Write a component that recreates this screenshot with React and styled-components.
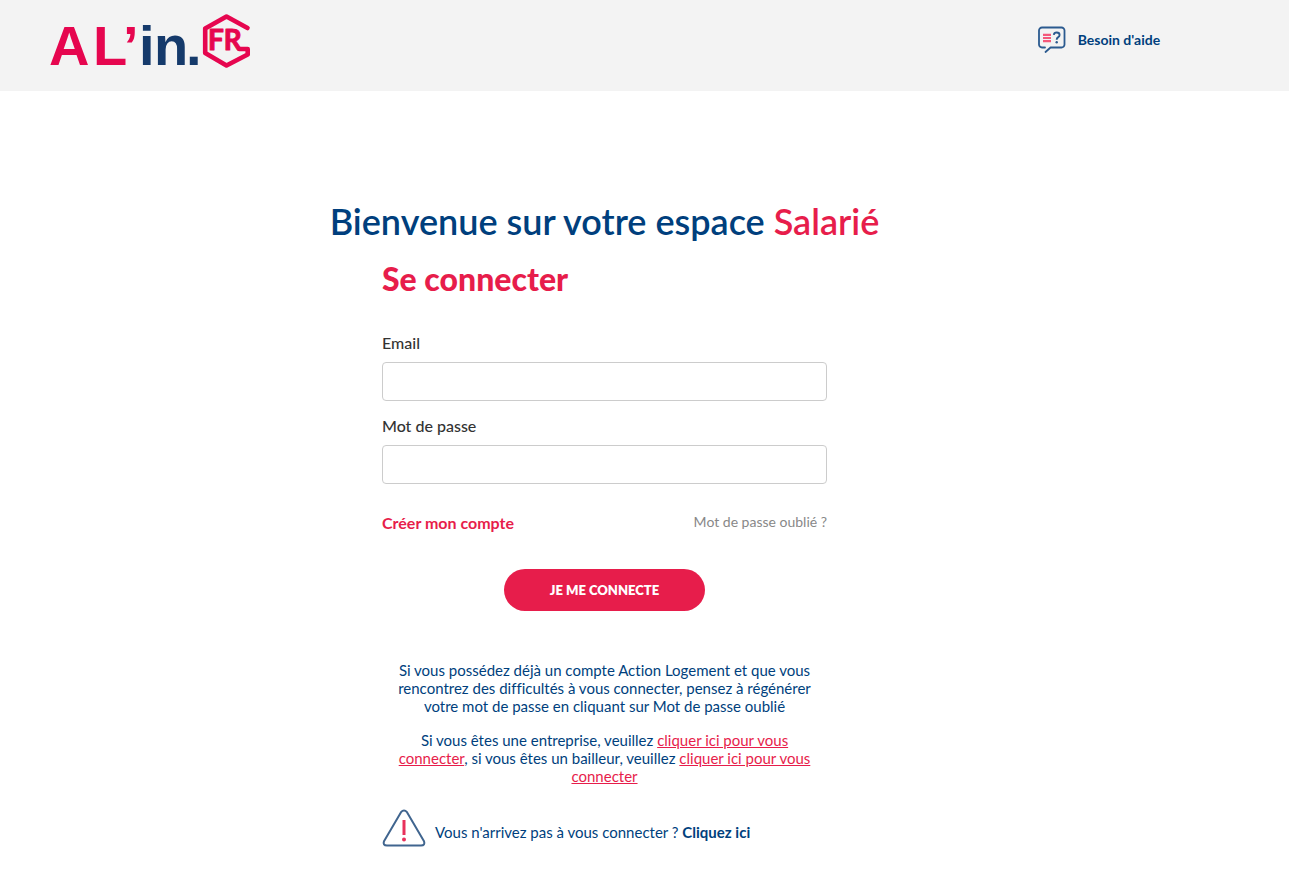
import React, { useState } from 'react';
import styled, { createGlobalStyle } from 'styled-components';

const GlobalStyle = createGlobalStyle`
    :root {
        --mainBlue: #003f7d;
        --mainRed: #e71d4b;
        --mainGrey: #f3f3f3;
        --mainDark: #333;
    }
    * {
        box-sizing: border-box;
    }
    body {
        margin: 0;
        background: #fff;
        color: var(--mainBlue);
        font-family: Lato, "Liberation Sans", sans-serif;
        font-size: 15px;
        font-variant-ligatures: none;
        line-height: 18px;
    }
`;

function Logo() {
    return (
        <svg width="202" height="56" viewBox="0 0 202 56" overflow="visible" role="img" aria-label="AL'in.fr">
            <g fontFamily="Liberation Sans, sans-serif" fontWeight="700" fontSize="56">
                <text y="52" fill="#e6064f">
                    <tspan x="-1">A</tspan>
                    <tspan x="43">L</tspan>
                    <tspan x="73">’</tspan>
                </text>
                <text y="52" fill="#153a6b">
                    <tspan x="89">i</tspan>
                    <tspan x="104">n</tspan>
                    <tspan x="136">.</tspan>
                </text>
            </g>
            <path
                d="M197.500 15 176.500 3.500 155.200 15.500v24.500l21.300 12.500 21.200-11v-5.500h-8.500"
                fill="none"
                stroke="#e6064f"
                strokeWidth="4.600"
                strokeLinejoin="round"
                strokeLinecap="round"
            />
            <text x="158" y="37" fill="#e6064f" stroke="#e6064f" strokeWidth="1" strokeLinejoin="round" fontFamily="Lato, sans-serif" fontWeight="700" fontSize="28">FR</text>
        </svg>
    );
}

function HelpIcon() {
    return (
        <svg width="28" height="28" viewBox="0 0 28 28" aria-hidden="true">
            <path
                d="M7 21.500H4A3 3 0 0 1 1 18.500V4.500A3 3 0 0 1 4 1.500H23.500A3 3 0 0 1 26.500 4.500V18.500A3 3 0 0 1 23.500 21.500H12.500L7.500 26"
                fill="none"
                stroke="#2b5a8f"
                strokeWidth="1.800"
                strokeLinecap="round"
                strokeLinejoin="round"
            />
            <path d="M5 8.800h8M5 12h8M5 15.200h8" stroke="#f4587a" strokeWidth="2.200" />
            <path d="M15.800 8.800q.3-2.300 2.900-2.300 2.900 0 2.900 2.500 0 1.500-1.600 2.400-1.300.8-1.300 2.400" fill="none" stroke="#2b5a8f" strokeWidth="1.900" />
            <circle cx="18.700" cy="16.200" r="1.200" fill="#2b5a8f" />
        </svg>
    );
}

function WarningIcon() {
    return (
        <svg width="44" height="38" viewBox="0 0 44 38" aria-hidden="true">
            <path
                d="M19 3.200Q22 -.2 25 3.200L42 32.200Q43.500 36.500 39 36.500H5Q.5 36.500 2 32.200Z"
                fill="none"
                stroke="#40658f"
                strokeWidth="2"
                strokeLinejoin="round"
            />
            <path d="M22 11v15" stroke="#e8315b" strokeWidth="3" />
            <circle cx="22" cy="30.500" r="2" fill="#e8315b" />
        </svg>
    );
}

function Field({ id, label, type, value, onChange }) {
    return (
        <FieldWrapper>
            <Label htmlFor={id}>{label}</Label>
            <Input id={id} type={type} value={value} onChange={e => onChange(e.target.value)} />
        </FieldWrapper>
    );
}

export default function App() {
    const [email, setEmail] = useState('');
    const [password, setPassword] = useState('');

    return (
        <>
            <GlobalStyle />
            <Header>
                <LogoLink href="#accueil">
                    <Logo />
                </LogoLink>
                <HelpLink href="#aide">
                    <HelpIcon />
                    Besoin d'aide
                </HelpLink>
            </Header>
            <Main>
                <Title>
                    Bienvenue sur votre espace <span>Salarié</span>
                </Title>
                <LoginForm onSubmit={e => e.preventDefault()}>
                    <Subtitle>Se connecter</Subtitle>
                    <Field id="email" label="Email" type="email" value={email} onChange={setEmail} />
                    <Field id="password" label="Mot de passe" type="password" value={password} onChange={setPassword} />
                    <LinksRow>
                        <CreateLink href="#creer">Créer mon compte</CreateLink>
                        <ForgotLink href="#oubli">Mot de passe oublié ?</ForgotLink>
                    </LinksRow>
                    <SubmitButton type="submit">Je me connecte</SubmitButton>
                    <Notes>
                        <p>
                            Si vous possédez déjà un compte Action Logement et que vous rencontrez des
                            difficultés à vous connecter, pensez à régénérer votre mot de passe en cliquant
                            sur Mot de passe oublié
                        </p>
                        <p>
                            Si vous êtes une entreprise, veuillez <a href="#entreprise">cliquer ici pour vous connecter</a>,
                            si vous êtes un bailleur, veuillez <a href="#bailleur">cliquer ici pour vous connecter</a>
                        </p>
                    </Notes>
                    <Warning>
                        <WarningIcon />
                        <p>
                            Vous n'arrivez pas à vous connecter ? <a href="#probleme">Cliquez ici</a>
                        </p>
                    </Warning>
                </LoginForm>
            </Main>
        </>
    );
}

const Header = styled.header`
    display: flex;
    justify-content: space-between;
    align-items: flex-start;
    padding: 13px 10% 22px 50px;
    background: var(--mainGrey);
`;

const LogoLink = styled.a`
    display: flex;
`;

const HelpLink = styled.a`
    display: flex;
    align-items: center;
    gap: 12px;
    padding-top: 13px;
    color: var(--mainBlue);
    font-size: 14px;
    font-weight: 700;
    text-decoration: none;
`;

const Main = styled.main`
    display: flex;
    flex-direction: column;
    align-items: center;
    padding: 108px 80px 16px 0;
`;

const Title = styled.h1`
    margin: 0 0 16px;
    font-size: 36px;
    font-weight: 600;
    line-height: 44px;
    text-align: center;
    span {
        color: var(--mainRed);
    }
`;

const LoginForm = styled.form`
    display: flex;
    flex-direction: column;
    width: 100%;
    max-width: 445px;
`;

const Subtitle = styled.h2`
    margin: 0 0 34px;
    color: var(--mainRed);
    font-size: 32px;
    font-weight: 900;
    line-height: 40px;
`;

const FieldWrapper = styled.div`
    display: flex;
    flex-direction: column;
    gap: 9px;
    margin-bottom: 15px;
`;

const Label = styled.label`
    color: var(--mainDark);
    font-size: 16px;
    font-weight: 500;
    line-height: 20px;
`;

const Input = styled.input`
    height: 39px;
    padding: 0 12px;
    border: 1px solid #ccc;
    border-radius: 4px;
    background: #fff;
    font: inherit;
`;

const LinksRow = styled.div`
    display: flex;
    justify-content: space-between;
    margin: 14px 0 36px;
`;

const CreateLink = styled.a`
    color: var(--mainRed);
    font-size: 16px;
    font-weight: 700;
    line-height: 20px;
    text-decoration: none;
`;

const ForgotLink = styled.a`
    color: #888;
    font-size: 14px;
    text-decoration: none;
`;

const SubmitButton = styled.button`
    align-self: center;
    height: 42px;
    padding: 0 46px;
    border: 0;
    border-radius: 21px;
    background: var(--mainRed);
    color: #fff;
    font-family: inherit;
    font-size: 13px;
    font-weight: 800;
    text-transform: uppercase;
    cursor: pointer;
`;

const Notes = styled.div`
    margin: 50px 0 8px;
    padding: 0 12px;
    text-align: center;
    p {
        margin: 0 0 16px;
    }
    a {
        color: var(--mainRed);
    }
`;

const Warning = styled.div`
    display: flex;
    align-items: center;
    gap: 9px;
    p {
        margin: 0;
        padding-top: 8px;
    }
    a {
        color: inherit;
        font-weight: 700;
        text-decoration: none;
    }
`;
